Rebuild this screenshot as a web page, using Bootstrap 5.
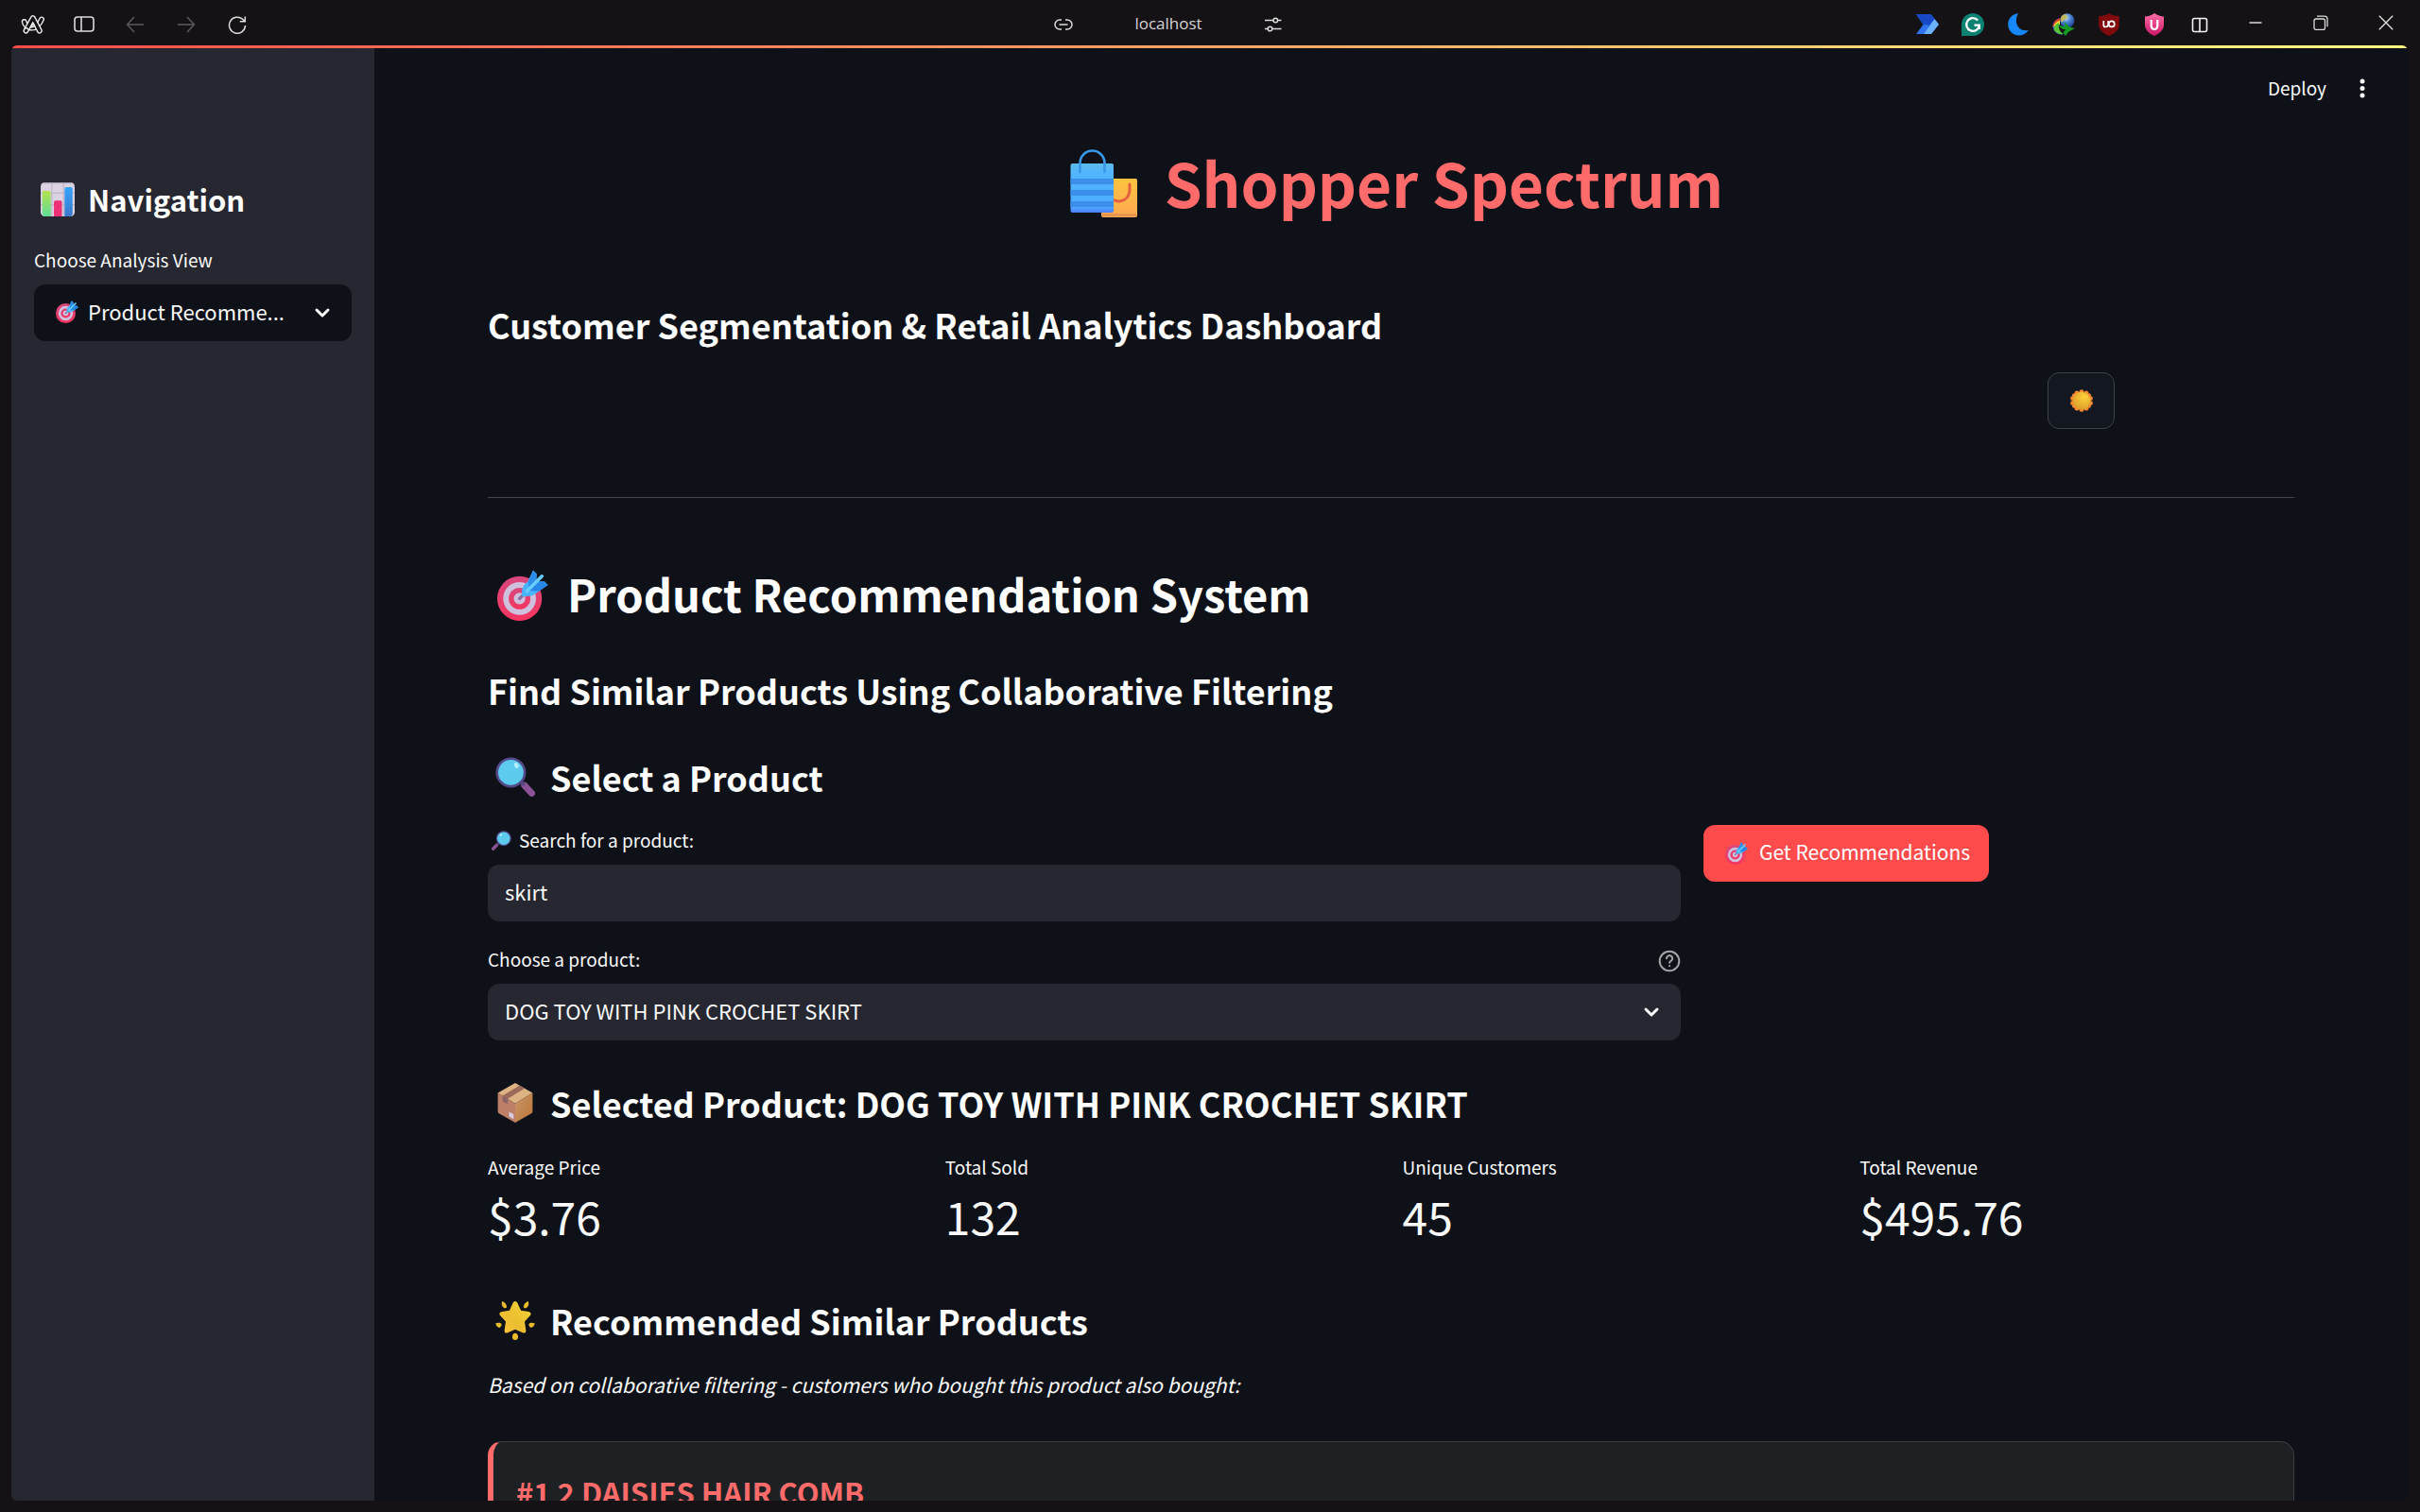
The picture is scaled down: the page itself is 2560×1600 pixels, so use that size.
<!DOCTYPE html>
<html lang="en" data-bs-theme="dark">
<head>
<meta charset="utf-8">
<meta name="viewport" content="width=device-width, initial-scale=1">
<title>Shopper Spectrum</title>
<link href="https://cdn.jsdelivr.net/npm/bootstrap@5.3.0/dist/css/bootstrap.min.css" rel="stylesheet">
<style>
  :root {
    --ink: #fafafa;
    --page: #0e1118;
    --panel: #262730;
    --coral: #ff6b6b;
    --primary: #ff4b4b;
    --chrome: #141214;
  }
  body {
    font-family: "Noto Sans CJK SC", "Noto Sans", sans-serif;
    font-size: 22px;
    line-height: 36px;
    color: var(--ink);
    background: var(--chrome);
  }
  h1, h2, h3, h4, p { margin: 0; }
  svg { flex: none; display: block; }

  /* window bar */
  .winbar { height: 48px; font-family: "Open Sans", "Noto Sans", sans-serif; font-size: 17px; line-height: 24px; color: #d4d3d4; }
  .winbar button { height: 48px; padding: 3px 0 0; border: 0; background: none; color: #dcdbdc; display: flex; align-items: center; justify-content: center; }
  .winbar button:disabled { color: #5c5b5d; }
  .wing { flex: 1 1 0; }
  .nav-side { padding-left: 8px; }
  .nav-side button { width: 54px; }
  .address { width: 270px; margin-right: 96px; }
  .address span { padding-top: 2px; }
  .address button, .ext button { width: 48px; }
  .win { padding-right: 2px; }
  .win button { width: 69px; padding: 0; }

  /* app frame */
  .frame { margin: 0 13px 12px 12px; border-radius: 6px; background: var(--page); min-height: 0; }
  .accent { height: 3px; background: linear-gradient(90deg, #ff4b4b, #fffd80); }
  .side { flex: 0 0 384px; padding: 138px 24px 24px; background: var(--panel); }
  .side h2 { font-size: 31px; line-height: 44px; font-weight: 600; margin-bottom: 26px; gap: 14px; padding-left: 7px; }
  .topbar { height: 87px; padding: 0 36px 4px 0; gap: 26px; }
  .topbar button { border: 0; background: none; color: var(--ink); padding: 0; font-size: 19px; line-height: 30px; }
  .scroll { overflow-y: auto; scrollbar-width: none; }
  .scroll::-webkit-scrollbar { display: none; }
  .body-pad { padding: 11px 120px 48px; }

  .brand { font-size: 64px; line-height: 86px; font-weight: 700; color: var(--coral); margin-bottom: 83px; gap: 28px; padding-left: 12px; }
  .page-title { font-size: 47px; line-height: 64px; font-weight: 600; gap: 20px; padding-left: 10px; margin-bottom: 45px; }
  .sub { font-size: 36px; line-height: 50px; font-weight: 600; }
  .sub.with-icon { gap: 16px; padding-left: 8px; }
  .drop { margin-top: 4px; }
  .rule { margin: 72px 0 69px; border-top: 1px solid #44464b; opacity: 1; }
  .gap-find { margin-top: 42px; }
  .gap-selected { margin-top: 41px; }
  .gap-recommended { margin-top: 53px; }

  .sun-row { gap: 24px; margin-top: 26px; }
  .sun-space { flex: 0 0 calc(600% / 7 - 12px); }
  .btn-sun { width: 71px; height: 60px; border: 1px solid #3e4148; border-radius: 12px; background: #131720; padding: 0; }

  .picker { gap: 24px; margin-top: 26px; }
  .picker-form { flex: 0 0 calc(200% / 3 - 12px); }
  .field-name { font-size: 19px; line-height: 28px; padding-top: 2px; }
  .field-head { margin-bottom: 12px; }
  .form-control, .form-select {
    height: 60px; font-size: 22px; line-height: 36px; padding: 0 60px 4px 18px;
    color: var(--ink); background-color: var(--panel); background-clip: border-box; border: 0; border-radius: 12px;
  }
  .form-select {
    background-image: url("data:image/svg+xml,%3Csvg xmlns='http://www.w3.org/2000/svg' viewBox='0 0 24 24'%3E%3Cpath d='M6 9l6 6 6-6' fill='none' stroke='%23fafafa' stroke-width='3' stroke-linecap='round' stroke-linejoin='round'/%3E%3C/svg%3E");
    background-size: 24px 24px; background-position: right 19px center;
  }
  .side .form-select { background-color: var(--page); padding-left: 57px; }
  .select-icon { position: absolute; left: 23px; top: 17px; pointer-events: none; }
  .btn-go { height: 60px; padding: 0 20px 0 23px; gap: 12px; border: 0; border-radius: 12px; font-size: 21px; line-height: 36px; color: #fff; background: var(--primary); }
  .btn-go span { padding-bottom: 4px; }
  .btn-go:hover { background: #ff3333; color: #fff; }

  .metrics { margin-top: 27px; }
  .metric-value { font-size: 48px; line-height: 66px; margin-top: 4px; }
  .note { font-size: 21px; font-style: italic; margin: 25px 0 42px; }
  .rec { border: 1px solid #3c3f42; border-left: 6px solid var(--coral); border-radius: 15px; background: #1e2123; padding: 31px 24px; }
  .rec h4 { font-size: 31px; line-height: 44px; font-weight: 600; color: var(--coral); }
</style>
<script src="https://cdn.jsdelivr.net/npm/bootstrap@5.3.0/dist/js/bootstrap.bundle.min.js"></script>
</head>
<body class="vh-100 d-flex flex-column overflow-hidden">

<svg width="0" height="0" class="position-absolute" aria-hidden="true">
  <defs>
    <linearGradient id="gPink" x1="0" y1="0" x2="0" y2="1"><stop offset="0" stop-color="#d9487d"/><stop offset="1" stop-color="#f5345f"/></linearGradient>
    <linearGradient id="gBlue" x1="0" y1="0" x2="0" y2="1"><stop offset="0" stop-color="#5cbcec"/><stop offset=".2" stop-color="#52b5ff"/><stop offset=".88" stop-color="#4dacff"/><stop offset="1" stop-color="#4b7cff"/></linearGradient>
    <linearGradient id="gOrange" x1="0" y1="0" x2="0" y2="1"><stop offset="0" stop-color="#fdc43f"/><stop offset="1" stop-color="#ffa851"/></linearGradient>
    <linearGradient id="gGreenBar" x1="0" y1="0" x2="0" y2="1"><stop offset="0" stop-color="#b5e34f"/><stop offset="1" stop-color="#5edc95"/></linearGradient>
    <linearGradient id="gBlueBar" x1="0" y1="0" x2="0" y2="1"><stop offset="0" stop-color="#35a5fb"/><stop offset="1" stop-color="#3c78cc"/></linearGradient>
    <linearGradient id="gStar" x1="1" y1="0" x2="0" y2="1"><stop offset="0" stop-color="#f3d53a"/><stop offset=".6" stop-color="#ecbd30"/><stop offset="1" stop-color="#ffc53c"/></linearGradient>
    <linearGradient id="gShield" x1="0" y1="0" x2="0" y2="1"><stop offset="0" stop-color="#ff6fa3"/><stop offset="1" stop-color="#c9166a"/></linearGradient>
    <linearGradient id="gBoxR" x1="0" y1="0" x2="1" y2="1"><stop offset="0" stop-color="#c9976b"/><stop offset="1" stop-color="#bb7435"/></linearGradient>
    <radialGradient id="gSun" cx=".65" cy=".3" r=".8"><stop offset="0" stop-color="#ffd23a"/><stop offset="1" stop-color="#d9992b"/></radialGradient>
    <radialGradient id="gGlobe" cx=".4" cy=".3" r=".8"><stop offset="0" stop-color="#cfe2f5"/><stop offset=".4" stop-color="#4f87d6"/><stop offset="1" stop-color="#12307e"/></radialGradient>
    <symbol id="i-target" viewBox="0 0 32 32">
      <circle cx="14" cy="18" r="14" fill="url(#gPink)"/><circle cx="14" cy="18" r="10.3" fill="#cfc0de"/>
      <circle cx="14" cy="18" r="6.8" fill="url(#gPink)"/><circle cx="14" cy="18" r="3.6" fill="#cfc0de"/>
      <path d="M14 18l6-6" stroke="#8b6f9e" stroke-width="2" stroke-linecap="round"/>
      <path d="M15.5 16.5C15 12 16.500 9 19 7.500L22.500 0.300 24.700 2.500 24.500 7.200 29.500 7.300 31.800 9.500 26 13.500C23 16.500 19 17 15.500 16.500z" fill="#48b4fb"/>
      <path d="M19.500 7.500L22.500.3l2.200 2.200-.2 4.500-4.500 5z" fill="#2b8de8"/><path d="M26 13.500l5.800-4-2.300-2.200-5 .2-4.500 5.500z" fill="#2787e6"/>
      <path d="M18.500 13.500L28 4" stroke="#67cdff" stroke-width="2.200" stroke-linecap="round"/>
    </symbol>
    <symbol id="i-lens" viewBox="0 0 32 32">
      <path d="M23.500 23l5.800 6.200" stroke="#8b5296" stroke-width="5.400" stroke-linecap="round"/>
      <path d="M20 19l3.500 4" stroke="#5b4a86" stroke-width="2.500"/>
      <circle cx="12.500" cy="12.500" r="12.200" fill="#544a8a"/><circle cx="12.500" cy="12.500" r="10.200" fill="#5dcbee"/>
      <ellipse cx="17" cy="6.800" rx="1.700" ry="2.300" transform="rotate(-25 17 6.800)" fill="#b3edfb"/>
    </symbol>
    <symbol id="i-box" viewBox="0 0 32 32">
      <path d="M16 0l14 8-14 8.500L2 8z" fill="#deb383"/><path d="M2 8l14 8.500V32L3 24.500Q2 24 2 23z" fill="#bd7f68"/>
      <path d="M30 8v15q0 1-1 1.500L16 32V16.500z" fill="url(#gBoxR)"/>
      <path d="M19.500 2l4 2.300L10 12.800 5.800 10.300z" fill="#9b6a58"/><path d="M5.800 10.300l4.200 2.500v4.400l-4.200-2.500z" fill="#8b6267"/>
      <path d="M11 23.200l3.700 2v4l-3.700-2.100z" fill="#d9cde6"/>
    </symbol>
    <symbol id="i-star" viewBox="0 0 32 32">
      <path d="M16 .8c1 0 1.600.7 2.100 1.900l2.500 5.500 6 .9c2.300.4 2.600 2 1.200 3.500l-4.200 4.500 1 6.700c.3 2.300-1 3.200-3 2.100L16 23.400l-5.600 2.500c-2 1.100-3.300.2-3-2.100l1-6.700-4.200-4.500C2.800 11.100 3.100 9.500 5.400 9.100l6-.9 2.500-5.500C14.400 1.500 15 .8 16 .8z" fill="url(#gStar)"/>
      <path d="M5.500.8c1.500.6 3.600 2 3.700 4.500-.2 1-1.600 1.300-2.500.6C5 4.500 4.800 2.500 5.500.8zM26.500.8c-1.500.6-3.600 2-3.700 4.500.2 1 1.600 1.300 2.500.6 1.700-1.400 1.900-3.400 1.200-5.100zM.2 18.500c1.700-.6 3.700-.8 4.600.3.700 1-.1 2.500-1.500 3.200C1.800 22 .4 20.500.2 18.500zM31.800 18.500c-1.700-.6-3.700-.8-4.600.3-.7 1 .1 2.500 1.500 3.200 1.500 0 2.900-1.500 3.100-3.500zM16 26.500c1.500 0 2.400 1.500 2.300 3 0 1.500-.8 2.500-2.300 2.500s-2.300-1-2.300-2.500c-.1-1.500.8-3 2.300-3z" fill="#e9bb2c"/>
    </symbol>
    <symbol id="i-chart" viewBox="0 0 32 32">
      <rect width="32" height="32" rx="4" fill="#dbd3e2"/>
      <path d="M10.500 0v32M21.500 0v32M0 10h32M0 21h32" stroke="#bdb5c6" stroke-width="1"/><path d="M3 .5h26" stroke="#a9a2b2" stroke-width="1"/>
      <path d="M1.500 9.500q0-1.500 1.500-1.500h5q1.500 0 1.500 1.500V32H4q-2.500-.5-2.500-3z" fill="url(#gGreenBar)"/>
      <path d="M12.500 18.500q0-1.500 1.500-1.500h4.500q1.500 0 1.500 1.500V32h-7.500z" fill="#ec3275"/>
      <path d="M22.500 6q0-1.500 1.500-1.500h4.500Q30 4.500 30 6v24q-.5 2-2.500 2h-5z" fill="url(#gBlueBar)"/>
    </symbol>
  </defs>
</svg>

<header class="winbar d-flex flex-shrink-0">
  <div class="wing nav-side d-flex">
    <button type="button" aria-label="Menu"><svg width="26" height="24" viewBox="0 0 26 24" fill="none" stroke-linecap="round" stroke-linejoin="round">
      <g stroke="#ecebec" stroke-width="6"><path d="M3.700 9c1 5 8 9.500 14 4 2.500-2.500 3.500-4.500 4.300-6.500"/></g><g stroke="#141214" stroke-width="3.200"><path d="M3.700 9c1 5 8 9.500 14 4 2.500-2.500 3.500-4.500 4.300-6.500"/></g>
      <g stroke="#ecebec" stroke-width="6"><path d="M5.500 18.500L12.800 5.200l7 13.300"/></g><g stroke="#141214" stroke-width="3.200"><path d="M5.500 18.500L12.800 5.200l7 13.300"/></g>
      <path d="M12.800 10l-2.500 4.500c2 .5 3.500 0 4.500-1zM4 16.500c1.200-1.400 3.500-.8 4 .8" stroke="#ecebec" stroke-width="1.400"/></svg></button>
    <button type="button" aria-label="Sidebar"><svg width="24" height="20" viewBox="0 0 24 20" fill="none" stroke="currentColor" stroke-width="1.600"><rect x="2" y="2" width="20" height="15" rx="3"/><path d="M9 2v15"/></svg></button>
    <button type="button" aria-label="Back" disabled><svg width="20" height="18" viewBox="0 0 20 18" fill="none" stroke="currentColor" stroke-width="1.400"><path d="M19 9H1.500M9 1L1.500 9 9 17"/></svg></button>
    <button type="button" aria-label="Forward" disabled><svg width="20" height="18" viewBox="0 0 20 18" fill="none" stroke="currentColor" stroke-width="1.400"><path d="M1 9h17.500M11 1l7.500 8L11 17"/></svg></button>
    <button type="button" aria-label="Reload"><svg width="20" height="20" viewBox="0 0 20 20" fill="none" stroke="currentColor" stroke-width="1.500"><path d="M18.500 11a8.500 8.500 0 1 1-2.800-6.600L18.300 6.700M18.300 1.500v5.300h-5.500"/></svg></button>
  </div>
  <div class="address d-flex justify-content-between align-items-center">
    <button type="button" aria-label="Copy link"><svg width="20" height="14" viewBox="0 0 20 14" fill="none" stroke="currentColor" stroke-width="1.500"><path d="M8 2H6a5 5 0 0 0 0 10h2M12 2h2a5 5 0 0 1 0 10h-2M5.500 7h9"/></svg></button>
    <span>localhost</span>
    <button type="button" aria-label="Site controls"><svg width="20" height="16" viewBox="0 0 20 16" fill="none" stroke="currentColor" stroke-width="1.500"><path d="M1 3.500h9M15 3.500h3.500M1 12.500h3M9 12.500h9.500"/><circle cx="12.300" cy="3.500" r="2.300"/><circle cx="6.500" cy="12.500" r="2.300"/></svg></button>
  </div>
  <div class="wing d-flex justify-content-end">
    <div class="ext d-flex">
      <button type="button" aria-label="Automate"><svg width="24" height="24" viewBox="0 0 24 24"><path d="M0 1h15.500L24 11.800 16 22H0l7.500-10z" fill="#2f74ec"/><path d="M0 1h15.500l4 5-5.500 6.500L7.500 12z" fill="#1749c4"/><path d="M19.500 6.200L24 11.800 16 22H8z" fill="#6bb2fb"/></svg></button>
      <button type="button" aria-label="Writing assistant"><svg width="24" height="24" viewBox="0 0 24 24"><path d="M0 24V12a12 12 0 1 1 12 12z" fill="#0a8171"/><path d="M17.200 7.600a6.800 6.800 0 1 0 1.600 5h-5.300M18.800 12v5" fill="none" stroke="#fff" stroke-width="2.300"/></svg></button>
      <button type="button" aria-label="Dark mode"><svg width="24" height="24" viewBox="0 0 24 24"><path d="M12 0C3 1.500-.5 9.500 2 16c3 8 14 11 21 2C11 20 7 9 12 0z" fill="#1788fb"/></svg></button>
      <button type="button" aria-label="Download manager"><svg width="24" height="24" viewBox="0 0 24 24"><circle cx="15.800" cy="7.800" r="7.600" fill="url(#gGlobe)"/><path d="M10 3c2-2.500 5.500-2 6 .5.300 2-4.500 3.500-6 6.500-1.500-2-1.500-5 0-7z" fill="#bdb85a"/><path d="M8.500 5C2 7 0 11 .8 15.500 1.500 20 6 23 11.500 22.500 6 20 4.500 12 8.500 5z" fill="#2b55c9"/><path d="M8.500 5C3.500 6.500.3 10.500.6 14.500 3 11 5 10 8 10z" fill="#e4402c"/><path d="M8 7.500c-4 1.500-6.500 4.500-7 8C3 12.500 5 12 8 12z" fill="#f8de3c"/><path d="M7 10C3 11.500 1.800 14 2 18c3 4 7 5 10 4-4-2-6-7-5-12z" fill="#58c136"/><path d="M6.500 11c.5 4 3.500 6 7.500 6l-2.500 3.500L14 24l3.500-4.500L24 16l-6-1.500L13 9l.5 4.500c-2.500 1-5 0-7-2.500z" fill="#159a24"/></svg></button>
      <button type="button" aria-label="Content blocker"><svg width="24" height="24" viewBox="0 0 24 24"><path d="M12 0c3 2.300 6 3 10.800 3v9c0 6-5 9.500-10.800 12C6.200 21.500 1.200 18 1.200 12V3C6 3 9 2.300 12 0z" fill="#800a0c"/><path d="M6.300 8v4.500q0 2 2.200 2t2.700-2V8" fill="none" stroke="#fff" stroke-width="1.700"/><circle cx="14.800" cy="11.400" r="3" fill="none" stroke="#fff" stroke-width="1.700"/></svg></button>
      <button type="button" aria-label="Unblocker"><svg width="24" height="24" viewBox="0 0 24 24"><path d="M12 0c3 2.200 6 3.300 10 3.600V12c0 6-4.500 9.500-10 12C6.500 21.500 2 18 2 12V3.600C6 3.300 9 2.200 12 0z" fill="url(#gShield)"/><path d="M8.700 7v6.500q.3 3.500 3.300 3.500t3.300-3.500V7" fill="none" stroke="#fff" stroke-width="2.200"/></svg></button>
      <button type="button" aria-label="Split view"><svg width="18" height="18" viewBox="0 0 18 18" fill="none" stroke="#f2f2f2" stroke-width="1.600"><rect x="1.500" y="2.500" width="15" height="14" rx="2"/><path d="M9 2.500v14"/></svg></button>
    </div>
    <div class="win d-flex">
      <button type="button" aria-label="Minimise"><svg width="16" height="16" viewBox="0 0 16 16"><path d="M1.500 8h13" stroke="currentColor" stroke-width="1.500"/></svg></button>
      <button type="button" aria-label="Restore"><svg width="16" height="16" viewBox="0 0 16 16" fill="none" stroke="currentColor" stroke-width="1.300"><rect x="1" y="4" width="11.500" height="11.500" rx="2"/><path d="M4 1.200h8q3 0 3 3v8"/></svg></button>
      <button type="button" aria-label="Close"><svg width="16" height="16" viewBox="0 0 16 16"><path d="M.8.800l14.400 14.400M15.200.800L.8 15.200" stroke="currentColor" stroke-width="1.400"/></svg></button>
    </div>
  </div>
</header>

<div class="frame flex-fill d-flex flex-column overflow-hidden">
  <div class="accent flex-shrink-0"></div>
  <div class="d-flex flex-fill overflow-hidden">

    <aside class="side">
      <h2 class="d-flex align-items-center"><svg width="36" height="36"><use href="#i-chart"/></svg><span>Navigation</span></h2>
      <label class="field-name field-head d-block" for="view">Choose Analysis View</label>
      <div class="position-relative">
        <select id="view" class="form-select"><option>Product Recomme...</option></select>
        <svg class="select-icon" width="24" height="24"><use href="#i-target"/></svg>
      </div>
    </aside>

    <main class="scroll flex-fill">
      <div class="topbar d-flex justify-content-end align-items-center">
        <button type="button">Deploy</button>
        <button type="button" aria-label="Main menu"><svg width="24" height="24" viewBox="0 0 24 24" fill="currentColor"><circle cx="12" cy="5" r="2.500"/><circle cx="12" cy="12.500" r="2.500"/><circle cx="12" cy="20" r="2.500"/></svg></button>
      </div>

      <div class="body-pad">
        <h1 class="brand d-flex justify-content-center align-items-center">
          <svg class="drop" width="72" height="74" viewBox="0 0 72 74">
            <rect x="33" y="32" width="38" height="41" rx="2" fill="url(#gOrange)"/>
            <path d="M34 70.500h36" stroke="#e6954d" stroke-width="3"/>
            <path d="M41 49c4 10 22 10 22-6v-5" fill="none" stroke="#e2603f" stroke-width="3" stroke-linecap="round"/>
            <rect x=".5" y="16" width="45.500" height="52" rx="2" fill="url(#gBlue)"/>
            <path d="M.5 35H46M.5 47H46M.5 59H46" stroke="#3b8eea" stroke-width="6"/>
            <path d="M10.500 25V15.500a13 13 0 0 1 26 0V25" fill="none" stroke="#3a98e8" stroke-width="2.600" stroke-linecap="round"/>
          </svg>
          <span>Shopper Spectrum</span>
        </h1>
        <h3 class="sub">Customer Segmentation &amp; Retail Analytics Dashboard</h3>

        <div class="sun-row d-flex">
          <div class="sun-space"></div>
          <button type="button" class="btn-sun btn d-flex align-items-center justify-content-center" aria-label="Switch theme">
            <svg width="24" height="24" viewBox="0 0 24 24"><g fill="#f58a33"><circle cx="12" cy="2.700" r="2.500"/><circle cx="12" cy="21.300" r="2.500"/><circle cx="2.700" cy="9.500" r="2.500"/><circle cx="2.700" cy="14.500" r="2.500"/><circle cx="21.300" cy="9.500" r="2.500"/><circle cx="21.300" cy="14.500" r="2.500"/><circle cx="7" cy="4" r="2.500"/><circle cx="17" cy="4" r="2.500"/><circle cx="7" cy="20" r="2.500"/><circle cx="17" cy="20" r="2.500"/><circle cx="4" cy="6.200" r="2"/><circle cx="20" cy="6.200" r="2"/><circle cx="4" cy="17.800" r="2"/><circle cx="20" cy="17.800" r="2"/></g><circle cx="12" cy="12" r="9.300" fill="url(#gSun)"/></svg>
          </button>
        </div>

        <hr class="rule">

        <h1 class="page-title d-flex align-items-center"><svg class="drop" width="54" height="54"><use href="#i-target"/></svg><span>Product Recommendation System</span></h1>
        <h3 class="sub">Find Similar Products Using Collaborative Filtering</h3>
        <h3 class="sub with-icon gap-find d-flex align-items-center"><svg width="42" height="42"><use href="#i-lens"/></svg><span>Select a Product</span></h3>

        <div class="picker d-flex">
          <div class="picker-form">
            <label class="field-name field-head d-flex align-items-center gap-2 ps-1" for="q"><svg width="21" height="21" viewBox="0 0 32 32"><use href="#i-lens" width="32" height="32" transform="matrix(-1 0 0 1 32 0)"/></svg><span>Search for a product:</span></label>
            <input id="q" type="text" class="form-control" value="skirt">
            <div class="field-head d-flex justify-content-between align-items-end mt-4">
              <label class="field-name" for="product">Choose a product:</label>
              <svg width="24" height="24" viewBox="0 0 24 24" fill="none" stroke="#a3a4a7" stroke-width="2" stroke-linecap="round"><circle cx="12" cy="12" r="10.300"/><path d="M9 9.200a3.100 3.100 0 1 1 4.700 2.700q-1.600.8-1.600 1.900M12.100 17.100v.1"/></svg>
            </div>
            <select id="product" class="form-select"><option>DOG TOY WITH PINK CROCHET SKIRT</option></select>
          </div>
          <div>
            <button type="button" class="btn btn-go d-flex align-items-center"><svg width="24" height="24"><use href="#i-target"/></svg><span>Get Recommendations</span></button>
          </div>
        </div>

        <h3 class="sub with-icon gap-selected d-flex align-items-center"><svg width="42" height="42"><use href="#i-box"/></svg><span>Selected Product: DOG TOY WITH PINK CROCHET SKIRT</span></h3>

        <div class="row gx-4 metrics">
          <div class="col-3"><div class="field-name">Average Price</div><div class="metric-value">$3.76</div></div>
          <div class="col-3"><div class="field-name">Total Sold</div><div class="metric-value">132</div></div>
          <div class="col-3"><div class="field-name">Unique Customers</div><div class="metric-value">45</div></div>
          <div class="col-3"><div class="field-name">Total Revenue</div><div class="metric-value">$495.76</div></div>
        </div>

        <h3 class="sub with-icon gap-recommended d-flex align-items-center"><svg width="42" height="42"><use href="#i-star"/></svg><span>Recommended Similar Products</span></h3>
        <p class="note">Based on collaborative filtering - customers who bought this product also bought:</p>

        <div class="rec"><h4>#1 2 DAISIES HAIR COMB</h4></div>
      </div>
    </main>
  </div>
</div>
</body>
</html>
